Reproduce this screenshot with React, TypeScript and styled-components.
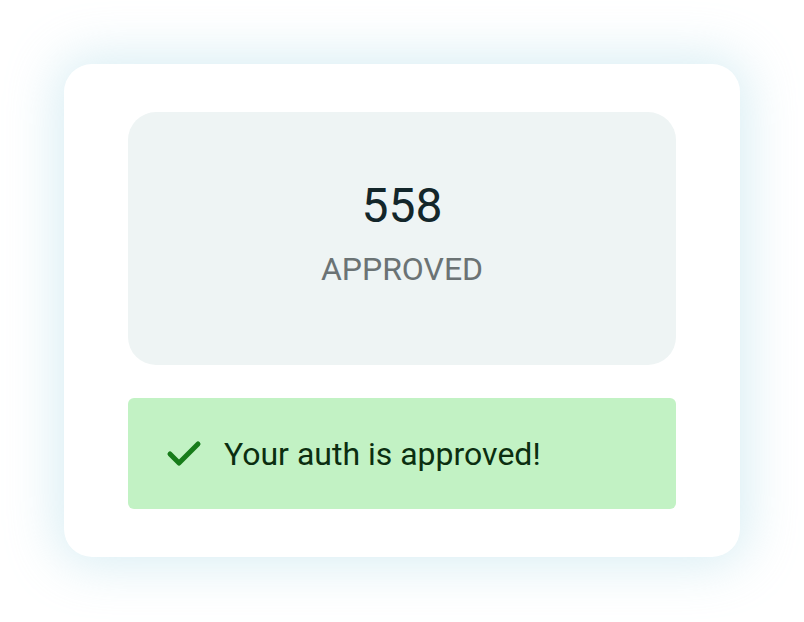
import styled, { createGlobalStyle } from "styled-components";

const GlobalStyle = createGlobalStyle`
  html, body {
    margin: 0;
    background: #ffffff;
    font-family: Roboto, "Noto Sans", sans-serif;
  }
`;

const Page = styled.div`
  padding: 64px 0;
  display: flex;
  justify-content: center;
`;

const Card = styled.div`
  width: 676px;
  box-sizing: border-box;
  padding: 48px 64px;
  background: #ffffff;
  border-radius: 28px;
  box-shadow: 0 0 50px 8px rgba(170, 218, 230, 0.45);
  display: flex;
  flex-direction: column;
  gap: 33px;
`;

const Stat = styled.div`
  height: 253px;
  box-sizing: border-box;
  padding-top: 64px;
  background: #eef4f4;
  border-radius: 28px;
  display: flex;
  flex-direction: column;
  align-items: center;
`;

const Value = styled.div`
  font-size: 48px;
  line-height: 60px;
  color: #13262a;
`;

const Label = styled.div`
  margin-top: 13px;
  font-size: 32px;
  line-height: 40px;
  color: #6b7374;
`;

const Alert = styled.div`
  height: 111px;
  box-sizing: border-box;
  padding: 0 38px;
  background: #c2f2c4;
  border-radius: 6px;
  display: flex;
  align-items: center;
  gap: 22px;
  color: #0b2e10;
  font-size: 32px;
`;

const CheckIcon = () => (
  <svg width="36" height="30" viewBox="0 0 36 30" aria-hidden="true">
    <polyline
      points="4,15 13,24 32,5"
      fill="none"
      stroke="#177c1a"
      strokeWidth="5"
      strokeLinecap="round"
      strokeLinejoin="round"
    />
  </svg>
);

export default function App() {
  return (
    <>
      <GlobalStyle />
      <Page>
        <Card>
          <Stat>
            <Value>558</Value>
            <Label>APPROVED</Label>
          </Stat>
          <Alert>
            <CheckIcon />
            <span>Your auth is approved!</span>
          </Alert>
        </Card>
      </Page>
    </>
  );
}
